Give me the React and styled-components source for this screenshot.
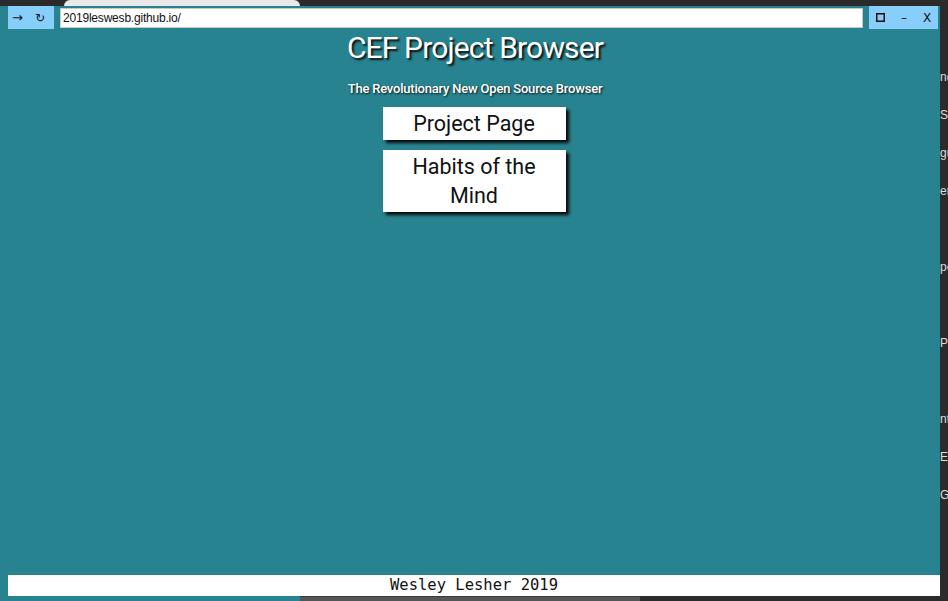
import React from "react";
import styled, { createGlobalStyle } from "styled-components";

const GlobalStyle = createGlobalStyle`
  html, body {
    margin: 0;
    padding: 0;
    background: #2b2b2b;
  }
  * {
    box-sizing: border-box;
  }
`;

const Screen = styled.div`
  width: 948px;
  height: 601px;
  display: grid;
  grid-template-rows: 6px 1fr;
  background: #2b2b2b;
  overflow: hidden;
  font-family: Roboto, "Liberation Sans", sans-serif;
`;

const DesktopStrip = styled.div`
  display: flex;
  align-items: flex-end;
  padding-left: 64px;
  overflow: hidden;
`;

const DesktopTab = styled.div`
  width: 236px;
  height: 6px;
  background: #e9e9e9;
  border-radius: 6px 6px 0 0;
`;

const Body = styled.div`
  display: grid;
  grid-template-columns: 940px 8px;
  min-height: 0;
`;

const Window = styled.div`
  display: flex;
  flex-direction: column;
  background: #27838f;
  min-height: 0;
`;

const TitleBar = styled.div`
  display: flex;
  align-items: stretch;
  height: 23px;
  padding: 0 2px 0 8px;
  gap: 6px;
`;

const ControlGroup = styled.div`
  display: flex;
  align-items: center;
  gap: ${(p) => p.$gap}px;
  width: ${(p) => p.$width}px;
  background: #87cefa;
  padding-left: ${(p) => p.$pad}px;
`;

const ControlGlyph = styled.span`
  font-family: "DejaVu Sans", sans-serif;
  font-size: ${(p) => p.$size || 13}px;
  color: #111;
  line-height: 1;
`;

const UrlField = styled.div`
  flex: 1;
  margin: 2px 0 1px;
  background: #fff;
  border: 1px solid #c8c8c8;
  display: flex;
  align-items: center;
  padding-left: 2px;
  font-family: "Liberation Sans", Arial, sans-serif;
  font-size: 12px;
  letter-spacing: -0.2px;
  color: #111;
`;

const Content = styled.main`
  flex: 1;
  display: flex;
  flex-direction: column;
  align-items: center;
  padding-left: 10px;
  padding-top: 1px;
`;

const Title = styled.h1`
  margin: 0;
  font-family: Roboto, sans-serif;
  font-weight: 400;
  font-size: 30px;
  line-height: 36px;
  letter-spacing: -0.85px;
  color: #fff;
  text-shadow: 2px 2px 2px #111;
`;

const Subtitle = styled.p`
  margin: 14px 0 0;
  font-family: Roboto, sans-serif;
  font-weight: 500;
  font-size: 13px;
  line-height: 18px;
  letter-spacing: -0.2px;
  color: #fff;
  text-shadow: 1px 1px 2px #111;
`;

const LinkList = styled.nav`
  display: flex;
  flex-direction: column;
  align-items: center;
  gap: 10px;
  margin-top: 9px;
`;

const LinkButton = styled.a`
  display: block;
  width: 183px;
  padding: 2px 14px;
  margin-left: -2px;
  background: #fff;
  color: #111;
  text-align: center;
  text-decoration: none;
  font-family: Roboto, sans-serif;
  font-size: 21.5px;
  line-height: 29px;
  box-shadow: 3px 3px 3px #0a0a0a;
`;

const Footer = styled.footer`
  display: flex;
  flex-direction: column;
`;

const FooterBar = styled.div`
  margin-left: 8px;
  height: 21px;
  background: #fff;
  text-align: center;
  font-family: "DejaVu Sans Mono", "Liberation Mono", monospace;
  font-size: 15.5px;
  line-height: 21px;
  color: #111;
`;

const FooterEdge = styled.div`
  height: 5px;
  display: flex;
`;

const EdgeGap = styled.div`
  width: 300px;
`;

const EdgeScroll = styled.div`
  width: 340px;
  background: #555;
  border-top: 1px solid #3a3a3a;
`;

const EdgeRest = styled.div`
  flex: 1;
  background: #2b2b2b;
`;

const SideStrip = styled.div`
  display: flex;
  flex-direction: column;
  gap: 24px;
  padding-top: 64px;
  overflow: hidden;
  font-family: "Liberation Sans", sans-serif;
  font-size: 12px;
  color: #ddd;
  white-space: nowrap;
`;

const SideBit = styled.span`
  display: block;
  height: 14px;
`;

const SquareIcon = () => (
  <svg width="9" height="9" viewBox="0 0 9 9">
    <rect x="0.75" y="0.75" width="7.5" height="7.5" fill="none" stroke="#111" strokeWidth="1.5" />
  </svg>
);

export default function App() {
  const sideBits = ["nd", "Se", "gu", "en", "", "pe", "", "PU", "", "nt", "Ed", "Ge"];

  return (
    <>
      <GlobalStyle />
      <Screen>
        <DesktopStrip>
          <DesktopTab />
        </DesktopStrip>
        <Body>
          <Window>
            <TitleBar>
              <ControlGroup $width={46} $gap={12} $pad={4}>
                <ControlGlyph $size={13}>→</ControlGlyph>
                <ControlGlyph $size={12}>↻</ControlGlyph>
              </ControlGroup>
              <UrlField>2019leswesb.github.io/</UrlField>
              <ControlGroup $width={69} $gap={16} $pad={7}>
                <SquareIcon />
                <ControlGlyph $size={12}>–</ControlGlyph>
                <ControlGlyph $size={12}>X</ControlGlyph>
              </ControlGroup>
            </TitleBar>
            <Content>
              <Title>CEF Project Browser</Title>
              <Subtitle>The Revolutionary New Open Source Browser</Subtitle>
              <LinkList>
                <LinkButton href="#project">Project Page</LinkButton>
                <LinkButton href="#habits">Habits of the Mind</LinkButton>
              </LinkList>
            </Content>
            <Footer>
              <FooterBar>Wesley Lesher 2019</FooterBar>
              <FooterEdge>
                <EdgeGap />
                <EdgeScroll />
                <EdgeRest />
              </FooterEdge>
            </Footer>
          </Window>
          <SideStrip>
            {sideBits.map((bit, i) => (
              <SideBit key={i}>{bit}</SideBit>
            ))}
          </SideStrip>
        </Body>
      </Screen>
    </>
  );
}
